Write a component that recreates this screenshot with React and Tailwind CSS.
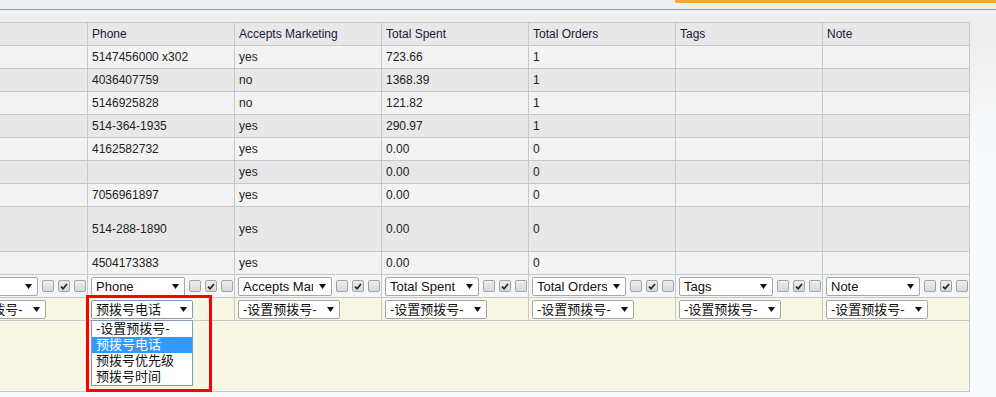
import React from 'react';

const columns = ['', 'Phone', 'Accepts Marketing', 'Total Spent', 'Total Orders', 'Tags', 'Note'];
const mapLabels = ['Email', 'Phone', 'Accepts Marketing', 'Total Spent', 'Total Orders', 'Tags', 'Note'];
const dialOptions = ['-设置预拨号-', '预拨号电话', '预拨号优先级', '预拨号时间'];

const rows = [
  { phone: '5147456000 x302', marketing: 'yes', spent: '723.66', orders: '1' },
  { phone: '4036407759', marketing: 'no', spent: '1368.39', orders: '1' },
  { phone: '5146925828', marketing: 'no', spent: '121.82', orders: '1' },
  { phone: '514-364-1935', marketing: 'yes', spent: '290.97', orders: '1' },
  { phone: '4162582732', marketing: 'yes', spent: '0.00', orders: '0' },
  { phone: '', marketing: 'yes', spent: '0.00', orders: '0' },
  { phone: '7056961897', marketing: 'yes', spent: '0.00', orders: '0' },
  { phone: '514-288-1890', marketing: 'yes', spent: '0.00', orders: '0', tall: true },
  { phone: '4504173383', marketing: 'yes', spent: '0.00', orders: '0' },
];

function Arrow() {
  return (
    <svg width="7" height="5" viewBox="0 0 7 5" className="mr-[5px] shrink-0">
      <path d="M0 0h7L3.5 5z" fill="#111" />
    </svg>
  );
}

// fake native select, drawn so the arrow matches the old windows look
function Select({ label, wide, focused, children }) {
  return (
    <div
      className={`relative flex h-[19px] shrink-0 items-center rounded-[2px] border bg-white ${
        wide ? 'w-[102px]' : 'w-[94px]'
      } ${focused ? 'border-[#7f9db9]' : 'border-[#a7a7a7]'}`}
    >
      <span className="mr-[6px] min-w-0 flex-1 overflow-hidden whitespace-nowrap pl-[4px] text-[13px] leading-[17px] text-[#111]">
        {label}
      </span>
      <Arrow />
      {children}
    </div>
  );
}

function Check({ checked }) {
  return (
    <span className="flex h-[12px] w-[12px] shrink-0 items-center justify-center rounded-[2px] border border-[#a4a4a4] bg-gradient-to-b from-[#eeeeee] to-[#d8d8d8]">
      {checked && (
        <svg width="8" height="7" viewBox="0 0 8 7">
          <path d="M1 3.6l2.1 2.1L7 1" stroke="#2a2a2a" strokeWidth="1.8" fill="none" />
        </svg>
      )}
    </span>
  );
}

const cell = 'flex items-center border-r border-b border-[#c8c8c8] pl-[4px] whitespace-nowrap overflow-hidden';

export default function App() {
  return (
    <div className="h-[397px] w-[996px] overflow-hidden bg-[linear-gradient(to_bottom,#efefef_40px,#f8fafc_160px)] font-['Liberation_Sans','Noto_Sans_CJK_SC',Arial,sans-serif] text-[12px] text-[#222]">
      {/* top bar */}
      <div className="flex h-[9px] justify-end">
        <div className="h-[3px] w-[321px] bg-[#fda532]" />
      </div>
      <div className="h-px bg-[#8e9cab]" />

      <div className="-ml-[60px] mt-[12px] grid w-[1030px] grid-cols-[repeat(7,147px)] border-l border-t border-[#c8c8c8]">
        {/* header */}
        {columns.map((c, i) => (
          <div key={'h' + i} className={`${cell} h-[23px] bg-[#e8e8e8] text-[#1d1640]`}>
            {c}
          </div>
        ))}

        {/* data rows */}
        {rows.map((r, ri) => {
          const bg = ri % 2 === 0 ? 'bg-[#f3f3f3]' : 'bg-[#e8e8e8]';
          const h = r.tall ? 'h-[45px]' : 'h-[23px]';
          const vals = ['', r.phone, r.marketing, r.spent, r.orders, '', ''];
          return vals.map((v, ci) => (
            <div key={ri + '-' + ci} className={`${cell} ${h} ${bg}`}>
              {v}
            </div>
          ));
        })}

        {/* column mapping row */}
        {mapLabels.map((label, i) => (
          <div key={'m' + i} className="flex h-[23px] items-center gap-[4px] border-r border-b border-[#c8c8c8] bg-[#f2f7fc] pl-[3px]">
            <Select label={label} />
            <Check />
            <Check checked />
            <Check />
          </div>
        ))}

        {/* dial setting row */}
        {mapLabels.map((label, i) => (
          <div key={'d' + i} className="flex h-[23px] items-center border-r border-b border-[#c8c8c8] bg-[#f8f7e4] pl-[3px]">
            {i === 1 ? (
              <Select label="预拨号电话" wide focused>
                <div className="absolute left-[-1px] top-[19px] z-10 w-[102px] border border-[#7f9db9] bg-white">
                  {dialOptions.map((o, oi) => (
                    <div
                      key={o}
                      className={`h-[16px] whitespace-nowrap pl-[4px] text-[13px] leading-[16px] ${
                        oi === 1 ? 'bg-[#3399ff] text-white' : 'text-[#111]'
                      }`}
                    >
                      {o}
                    </div>
                  ))}
                </div>
                <div className="pointer-events-none absolute left-[-6px] top-[-6px] z-20 h-[97px] w-[126px] border-[3px] border-[#ff0000]" />
              </Select>
            ) : (
              <Select label="-设置预拨号-" wide />
            )}
          </div>
        ))}

        {/* empty footer area */}
        <div className="col-span-7 h-[71px] border-r border-b border-[#c8c8c8] bg-[#f8f7e4]" />
      </div>
    </div>
  );
}
